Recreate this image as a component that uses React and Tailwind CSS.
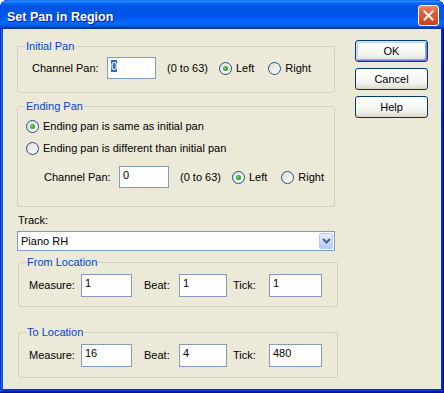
import React from 'react';

function Radio({ checked, label }) {
  return (
    <span className="flex items-center">
      <span className="flex h-[13px] w-[13px] items-center justify-center rounded-full border border-[#1C5180] bg-[linear-gradient(135deg,#DCDCD7_0%,#EFEFEA_50%,#FFFFFF_100%)]">
        {checked && <span className="h-[5px] w-[5px] rounded-full bg-[radial-gradient(circle_at_40%_40%,#7EDB7E_0%,#2FAE2F_45%,#1A861A_100%)]" />}
      </span>
      <span className="ml-[4px] leading-[13px]">{label}</span>
    </span>
  );
}

function Field({ value, className, selected }) {
  return (
    <div className={'border border-[#7F9DB9] bg-white px-[3px] pt-[2px] leading-[12px] ' + className}>
      {selected ? <span className="bg-[#316AC5] text-white">{value}</span> : value}
    </div>
  );
}

function Btn({ label, focus }) {
  return (
    <button
      className={
        'flex h-[22px] w-[73px] items-center justify-center rounded-[3px] border border-[#003C74] bg-[linear-gradient(to_bottom,#FFFFFF_0%,#F3F3EF_70%,#E2DFD5_92%,#D6D0C5_100%)] leading-[13px] text-black ' +
        (focus ? 'shadow-[inset_1px_1px_#CEE7FF,inset_-1px_-1px_#6982EE,inset_2px_2px_#BCD4F6,inset_-2px_-2px_#89ADE4]' : '')
      }
    >
      {label}
    </button>
  );
}

function Group({ title, className, children }) {
  return (
    <fieldset className={'rounded-[3px] border border-[#D0D0BF] ' + className}>
      <legend className="ml-[7px] px-[1px] leading-[13px] text-[#0046D5]">{title}</legend>
      {children}
    </fieldset>
  );
}

export default function App() {
  return (
    <div className="flex h-[393px] w-[444px] flex-col overflow-hidden rounded-t-[8px] bg-[#0831D9] font-['Liberation_Sans',Arial,sans-serif] text-[11px] text-black shadow-[inset_-1px_-1px_#00138c,inset_1px_1px_#0831d9,inset_-2px_-2px_#001ea0,inset_2px_2px_#166aee,inset_-3px_-3px_#003bda,inset_3px_3px_#0855dd]">
      {/* title bar */}
      <div className="flex h-[29px] shrink-0 items-start justify-between rounded-t-[8px] bg-[linear-gradient(to_bottom,#0058EE_0%,#3593FF_4%,#288EFF_6%,#127DFF_8%,#036FFC_10%,#0262EE_14%,#0057E5_20%,#0054E3_24%,#0055EB_56%,#005BF5_66%,#026AFE_76%,#0062EF_86%,#0052D6_92%,#0040AB_94%,#003092_100%)] pl-[7px] pr-[5px]">
        <span className="mt-[10px] text-[12.5px] font-bold leading-[14px] text-white [text-shadow:1px_1px_0_#0F1089]">
          Set Pan in Region
        </span>
        <div className="mt-[5px] flex h-[21px] w-[21px] items-center justify-center rounded-[3px] border border-white bg-[linear-gradient(to_bottom,#E9896B_0%,#DD5F3B_35%,#D4502C_70%,#C2411E_100%)]">
          <svg width="11" height="11" viewBox="0 0 11 11">
            <path d="M1.5 1.5 L9.5 9.5 M9.5 1.5 L1.5 9.5" stroke="#fff" strokeWidth="2" strokeLinecap="square" />
          </svg>
        </div>
      </div>

      {/* client area */}
      <div className="flex flex-1 px-[3px] pb-[4px]">
        <div className="flex flex-1 bg-[#ECE9D8] pl-[14px] pt-[11px]">
          <div className="flex w-[321px] flex-col">
            <Group title="Initial Pan" className="w-[318px]">
              <div className="flex items-center pb-[13px] pl-[14px] pt-[4px]">
                <span className="w-[75px]">Channel Pan:</span>
                <Field value="0" selected className="h-[22px] w-[49px]" />
                <span className="ml-[11px]">(0 to 63)</span>
                <span className="ml-[11px]"><Radio checked label="Left" /></span>
                <span className="ml-[14px]"><Radio label="Right" /></span>
              </div>
            </Group>

            <Group title="Ending Pan" className="mt-[7px] w-[318px]">
              <div className="flex flex-col pb-[18px] pl-[8px] pt-[2px]">
                <div className="flex h-[22px] items-center"><Radio checked label="Ending pan is same as initial pan" /></div>
                <div className="flex h-[22px] items-center"><Radio label="Ending pan is different than initial pan" /></div>
                <div className="mt-[7px] flex items-center pl-[18px]">
                  <span className="w-[75px]">Channel Pan:</span>
                  <Field value="0" className="h-[22px] w-[50px]" />
                  <span className="ml-[11px]">(0 to 63)</span>
                  <span className="ml-[11px]"><Radio checked label="Left" /></span>
                  <span className="ml-[14px]"><Radio label="Right" /></span>
                </div>
              </div>
            </Group>

            <div className="mt-[7px] pl-[1px] leading-[13px]">Track:</div>
            <div className="mt-[4px] flex h-[20px] w-[318px] items-center border border-[#7F9DB9] bg-white">
              <span className="flex-1 pl-[3px] leading-[13px]">Piano RH</span>
              <span className="mr-[1px] flex h-[16px] w-[14px] items-center justify-center rounded-[2px] border border-[#B9CCF5] bg-[linear-gradient(to_bottom,#E4ECFD_0%,#CCDAFA_60%,#B6C9F7_100%)]">
                <svg width="9" height="6" viewBox="0 0 9 6">
                  <path d="M1 1 L4.5 4.5 L8 1" stroke="#4D6185" strokeWidth="2" fill="none" />
                </svg>
              </span>
            </div>

            <Group title="From Location" className="ml-[1px] mt-[5px] w-[320px]">
              <div className="flex items-center pb-[9px] pl-[10px] pt-[5px]">
                <span className="w-[52px]">Measure:</span>
                <Field value="1" className="h-[23px] w-[51px]" />
                <span className="ml-[12px] w-[35px]">Beat:</span>
                <Field value="1" className="h-[23px] w-[48px]" />
                <span className="ml-[6px] w-[36px]">Tick:</span>
                <Field value="1" className="h-[23px] w-[53px]" />
              </div>
            </Group>

            <Group title="To Location" className="ml-[1px] mt-[19px] w-[320px]">
              <div className="flex items-center pb-[10px] pl-[10px] pt-[5px]">
                <span className="w-[52px]">Measure:</span>
                <Field value="16" className="h-[23px] w-[51px]" />
                <span className="ml-[12px] w-[35px]">Beat:</span>
                <Field value="4" className="h-[23px] w-[48px]" />
                <span className="ml-[6px] w-[36px]">Tick:</span>
                <Field value="480" className="h-[23px] w-[53px]" />
              </div>
            </Group>
          </div>

          <div className="ml-[17px] flex flex-col gap-[6px]">
            <Btn label="OK" focus />
            <Btn label="Cancel" />
            <Btn label="Help" />
          </div>
        </div>
      </div>
    </div>
  );
}
